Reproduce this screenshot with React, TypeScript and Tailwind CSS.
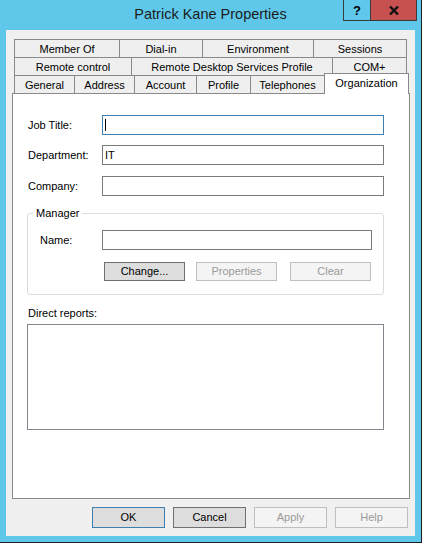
import React from 'react';

function Tab({ label, className }: { label: string; className: string }) {
  return (
    <div
      className={`flex h-[18px] items-center justify-center border-l border-t border-[#898989] bg-[#efefef] pt-px text-[11px] text-black ${className}`}
    >
      {label}
    </div>
  );
}

function Box({ className, children }: { className: string; children?: React.ReactNode }) {
  return (
    <div className={`flex items-center border bg-white pl-[2px] text-[11px] ${className}`}>
      {children}
    </div>
  );
}

function Button({
  label,
  variant = 'normal',
  className = '',
}: {
  label: string;
  variant?: 'normal' | 'default' | 'disabled';
  className?: string;
}) {
  const styles = {
    normal: 'border-[#707070] bg-[#dddddd] text-black',
    default: 'border-[#3c7fb1] bg-[#dddddd] text-black',
    disabled: 'border-[#bfbfbf] bg-[#f4f4f4] text-[#9a9a9a]',
  }[variant];

  return (
    <div className={`flex items-center justify-center border text-[11px] ${styles} ${className}`}>
      {label}
    </div>
  );
}

export default function App() {
  return (
    <div className="h-[545px] w-[423px] overflow-hidden bg-white font-['Liberation_Sans',Arial,sans-serif] leading-[13px]">
      <div className="h-[543px] w-[422px] border-b border-r border-[#1e1e1e] bg-[#5fc8ea]">
        {/* title bar */}
        <div className="relative flex h-[30px] items-center justify-center pb-px">
          <span className="text-[14.5px] text-[#1c1c1c]">Patrick Kane Properties</span>
          <div className="absolute right-[4px] top-0 flex h-[21px]">
            <div className="flex w-[27px] items-center justify-center border-b border-l border-[#3a3a3a] text-[13px] font-bold text-black">
              ?
            </div>
            <div className="flex w-[47px] items-center justify-center border-b border-l border-r border-[#3a3a3a] bg-[#c75050]">
              <svg width="10" height="9" viewBox="0 0 10 9">
                <path d="M1 0.5 L9 8.5 M9 0.5 L1 8.5" stroke="#111" strokeWidth="2.4" />
              </svg>
            </div>
          </div>
        </div>

        {/* dialog body */}
        <div className="mx-[6px] h-[506px] bg-[#f0f0f0] pt-[9px]">
          <div className="flex h-[18px] pl-[8px]">
            <Tab label="Member Of" className="w-[105px]" />
            <Tab label="Dial-in" className="w-[83px]" />
            <Tab label="Environment" className="w-[111px]" />
            <Tab label="Sessions" className="w-[94px] border-r" />
          </div>
          <div className="flex h-[18px] pl-[8px]">
            <Tab label="Remote control" className="w-[117px]" />
            <Tab label="Remote Desktop Services Profile" className="w-[201px]" />
            <Tab label="COM+" className="w-[75px] border-r" />
          </div>
          <div className="flex h-[18px] items-start pl-[8px]">
            <Tab label="General" className="w-[60px]" />
            <Tab label="Address" className="w-[60px]" />
            <Tab label="Account" className="w-[62px]" />
            <Tab label="Profile" className="w-[54px]" />
            <Tab label="Telephones" className="w-[74px]" />
            <div className="relative z-10 -mt-[2px] flex h-[21px] w-[85px] items-start justify-center border-l border-r border-t border-[#898989] bg-white pt-[3px] text-[11px]">
              Organization
            </div>
          </div>

          {/* tab page */}
          <div className="ml-[6px] h-[406px] w-[398px] border border-[#898989] bg-white pl-[15px] pt-[21px] text-[11px] text-black">
            <div className="flex items-center">
              <span className="w-[74px]">Job Title:</span>
              <Box className="h-[20px] w-[282px] border-[#3c7fb1]">
                <span className="h-[12px] w-px bg-black" />
              </Box>
            </div>
            <div className="mt-[10px] flex items-center">
              <span className="w-[74px]">Department:</span>
              <Box className="h-[20px] w-[282px] border-[#7a7a7a]">IT</Box>
            </div>
            <div className="mt-[11px] flex items-center">
              <span className="w-[74px]">Company:</span>
              <Box className="h-[20px] w-[282px] border-[#7a7a7a]" />
            </div>

            {/* manager group */}
            <div className="relative -ml-px mt-[17px] h-[82px] w-[357px] rounded-[3px] border border-[#dcdcdc] pl-[12px] pt-[16px]">
              <span className="absolute -top-[7px] left-[5px] bg-white px-[3px]">Manager</span>
              <div className="flex items-center">
                <span className="w-[62px]">Name:</span>
                <Box className="h-[20px] w-[270px] border-[#7a7a7a]" />
              </div>
              <div className="mt-[12px] flex pl-[64px]">
                <Button label="Change..." className="h-[19px] w-[81px]" />
                <Button label="Properties" variant="disabled" className="ml-[11px] h-[19px] w-[81px]" />
                <Button label="Clear" variant="disabled" className="ml-[13px] h-[19px] w-[81px]" />
              </div>
            </div>

            <div className="mt-[12px]">Direct reports:</div>
            <div className="-ml-px mt-[4px] h-[106px] w-[357px] border border-[#828790] bg-white" />
          </div>

          {/* dialog buttons */}
          <div className="mt-[8px] flex justify-end gap-[8px] pr-[7px]">
            <Button label="OK" variant="default" className="h-[21px] w-[73px]" />
            <Button label="Cancel" className="h-[21px] w-[73px]" />
            <Button label="Apply" variant="disabled" className="h-[21px] w-[73px]" />
            <Button label="Help" variant="disabled" className="h-[21px] w-[73px]" />
          </div>
        </div>
      </div>
    </div>
  );
}
